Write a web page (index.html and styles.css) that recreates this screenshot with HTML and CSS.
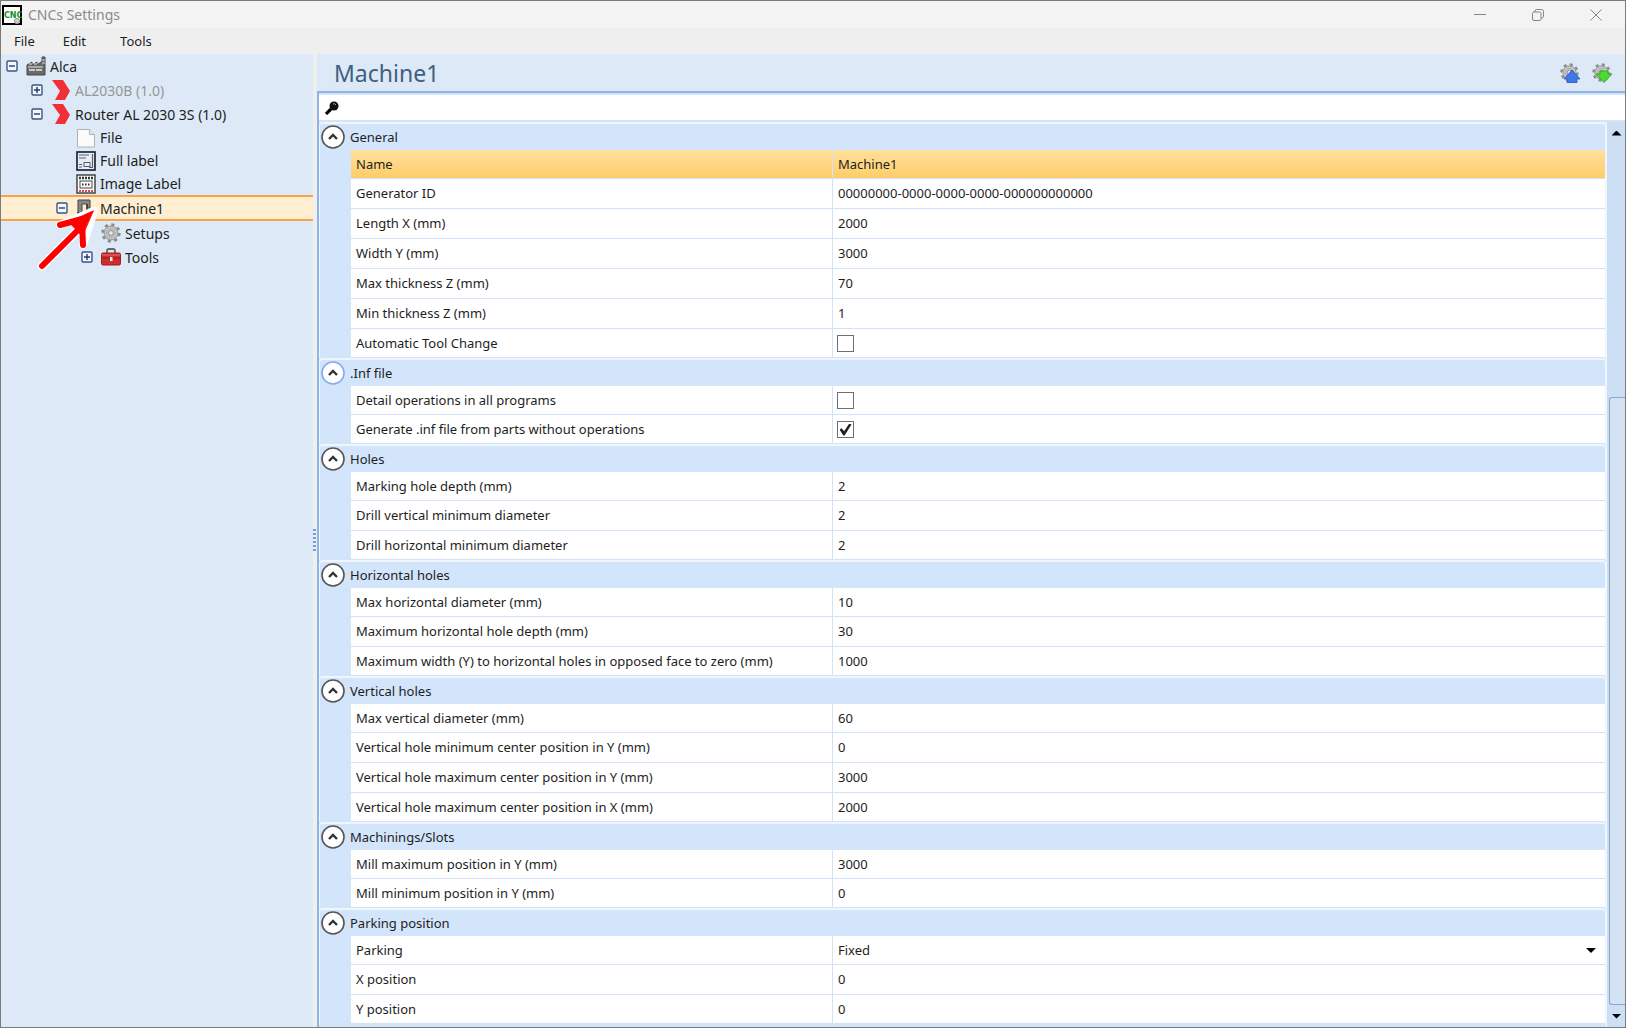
FILE: index.html
```
<!DOCTYPE html>
<html lang="en">
<head>
    <meta charset="UTF-8">
    <meta name="viewport" content="width=device-width, initial-scale=1.0">
    <title>CNCs Settings</title>
    <link rel="stylesheet" href="styles.css">
</head>
<body>
    <!-- Shared icon shapes -->
    <svg class="defs" aria-hidden="true">
        <symbol id="minus" viewBox="0 0 12 12"><rect x="1" y="1" width="10" height="10" rx="1" fill="#f4f8fd" stroke="#3a5583" stroke-width="1.4"/><path d="M3 6h6" stroke="#1f3b70" stroke-width="1.4"/></symbol>
        <symbol id="plus" viewBox="0 0 12 12"><rect x="1" y="1" width="10" height="10" rx="1" fill="#f4f8fd" stroke="#3a5583" stroke-width="1.4"/><path d="M3 6h6M6 3v6" stroke="#1f3b70" stroke-width="1.4"/></symbol>
        <symbol id="chevron" viewBox="0 0 20 20"><path d="M1 0h11l7 11-5 9H4l5-9z" fill="#ef3038"/></symbol>
        <symbol id="gear" viewBox="0 0 20 20">
            <circle cx="10" cy="10" r="8.2" fill="none" stroke="#8c8c8c" stroke-width="3" stroke-dasharray="3.1 3.34"/>
            <circle cx="10" cy="10" r="7" fill="#c6c6c6" stroke="#929292"/>
            <circle cx="10" cy="10" r="4.4" fill="none" stroke="#adadad"/>
            <circle cx="10" cy="10" r="2.4" fill="#e6edf6" stroke="#8c8c8c"/>
        </symbol>
        <symbol id="up" viewBox="0 0 24 24"><circle cx="12" cy="12" r="11" fill="#fff" stroke="currentColor" stroke-width="1.6"/><path d="M8 14l4-4 4 4" fill="none" stroke="#333" stroke-width="2.4"/></symbol>
    </svg>

    <div class="window">
        <header class="titlebar">
            <svg class="app-icon" viewBox="0 0 20 20"><rect x="1" y="1" width="18" height="18" fill="#fff" stroke="#000" stroke-width="2"/><text class="app-icon-text" x="2" y="13">CNC</text><circle cx="15" cy="16" r="2.6" fill="#ccc" stroke="#999"/></svg>
            <span class="title">CNCs Settings</span>
            <div class="window-buttons">
                <button aria-label="Minimize"><svg viewBox="0 0 12 12"><path d="M0 5.500h12"/></svg></button>
                <button aria-label="Restore"><svg viewBox="0 0 12 12"><rect x=".5" y="3" width="8.5" height="8.5" rx="1.5"/><path d="M3 3V2q0-1.500 1.500-1.500H9.500q2 0 2 2V7.500q0 1.500-2 1.500"/></svg></button>
                <button aria-label="Close"><svg viewBox="0 0 12 12"><path d="M.5.500l11 11M11.500.500l-11 11"/></svg></button>
            </div>
        </header>

        <nav class="menu">
            <button>File</button>
            <button>Edit</button>
            <button>Tools</button>
        </nav>

        <main class="content">
            <aside class="sidebar">
                <ul class="tree">
                    <li class="node">
                        <button class="expander" aria-label="Collapse Alca"><svg><use href="#minus"/></svg></button>
                        <svg class="icon" viewBox="0 0 20 20"><path d="M1 19V9l5-3v3l5-3v3l4-3h1V1h3v18z" fill="#6a6a6a" stroke="#4a4a4a"/><path d="M2 11h15M3 8h3M8 8h3" stroke="#bdbdbd" stroke-width="1.500"/><path d="M3 14h6M10 14h6" stroke="#c9c9c9" stroke-width="2"/><path d="M16 4h3M16 7h3" stroke="#ddd"/></svg>
                        <span>Alca</span>
                    </li>
                    <li class="node level-1 disabled">
                        <button class="expander" aria-label="Expand AL2030B"><svg><use href="#plus"/></svg></button>
                        <svg class="icon"><use href="#chevron"/></svg>
                        <span>AL2030B (1.0)</span>
                    </li>
                    <li class="node level-1">
                        <button class="expander" aria-label="Collapse Router"><svg><use href="#minus"/></svg></button>
                        <svg class="icon"><use href="#chevron"/></svg>
                        <span>Router AL 2030 3S (1.0)</span>
                    </li>
                    <li class="node level-2">
                        <span class="expander"></span>
                        <svg class="icon" viewBox="0 0 20 20"><path d="M1.500 1.500h12l5 5v12.500h-17z" fill="#fbfbfb" stroke="#b2b2b2"/><path d="M13.500 1.500v5h5" fill="#e8e8e8" stroke="#b2b2b2"/></svg>
                        <span>File</span>
                    </li>
                    <li class="node level-2">
                        <span class="expander"></span>
                        <svg class="icon" viewBox="0 0 20 20"><rect x="1" y="1" width="18" height="18" fill="#e6edf7" stroke="#1d2636" stroke-width="1.700"/><path d="M3 4h10M3 7h7M3 13.500h3M3 16h3M16.500 3v13M13 16.500h4" stroke="#59606c" stroke-width="1.200"/><rect x="8" y="11.500" width="6" height="4" fill="none" stroke="#59606c"/></svg>
                        <span>Full label</span>
                    </li>
                    <li class="node level-2">
                        <span class="expander"></span>
                        <svg class="icon" viewBox="0 0 20 20"><rect x="1" y="1" width="18" height="18" fill="#fff" stroke="#444" stroke-width="1.500"/><path d="M3 4h14" stroke="#333" stroke-width="2.500" stroke-dasharray="2 1"/><rect x="4" y="7" width="12" height="7" fill="#fff" stroke="#444"/><path d="M6 10.500h8" stroke="#333" stroke-width="2" stroke-dasharray="1.500 1.500"/><path d="M3 17h14" stroke="#e0474c" stroke-width="2" stroke-dasharray="2 1"/></svg>
                        <span>Image Label</span>
                    </li>
                    <li class="node level-2 selected">
                        <button class="expander" aria-label="Collapse Machine1"><svg><use href="#minus"/></svg></button>
                        <svg class="icon" viewBox="0 0 20 20"><path d="M2 2h12v8h-3V6H6v9H2z" fill="#888" stroke="#444"/><path d="M11 6v7M1 16h17M2 14v4M17 15v4" stroke="#333" stroke-width="1.500"/></svg>
                        <span>Machine1</span>
                    </li>
                    <li class="node level-3">
                        <span class="expander"></span>
                        <svg class="icon"><use href="#gear"/></svg>
                        <span>Setups</span>
                    </li>
                    <li class="node level-3">
                        <button class="expander" aria-label="Expand Tools"><svg><use href="#plus"/></svg></button>
                        <svg class="icon" viewBox="0 0 20 20"><path d="M6 6V4q0-2 2-2h4q2 0 2 2v2" fill="none" stroke="#666" stroke-width="1.800"/><rect x=".5" y="6" width="19" height="12" rx="1.500" fill="#cf2d2d" stroke="#982020"/><path d="M1 8h18" stroke="#ee7070"/><path d="M1 11h18" stroke="#8c1c1c"/><rect x="9" y="10" width="2.500" height="4" fill="#eee"/></svg>
                        <span>Tools</span>
                    </li>
                </ul>
                <!-- Pointer over the selected machine -->
                <svg class="pointer" viewBox="0 0 62 66">
                    <g fill="none" stroke-linecap="round" stroke-linejoin="round">
                        <path d="M5 59L45 19" stroke="#fff" stroke-width="9"/>
                        <path d="M57 4L23 18M57 4L46 38" stroke="#fff" stroke-width="8"/>
                        <path d="M5 59L45 19" stroke="#f00" stroke-width="6"/>
                        <path d="M23 18L45 12L46 38" stroke="#f00" stroke-width="6"/>
                        <path d="M56 4L32 15L45 29z" fill="#f00" stroke="#f00"/>
                    </g>
                </svg>
            </aside>

            <div class="splitter"><span class="grip"></span></div>

            <section class="panel">
                <div class="panel-header">
                    <h1>Machine1</h1>
                    <button aria-label="Export settings"><svg viewBox="0 0 20 20"><use href="#gear" width="19" height="19"/><path d="M12 7l8 9h-3v3.500H7V16H4z" fill="#3f79e8" stroke="#2353b5" stroke-width=".8"/></svg></button>
                    <button aria-label="Import settings"><svg viewBox="0 0 20 20"><use href="#gear" width="19" height="19"/><path d="M8 8h8v3h4l-8 8.500L4 11h4z" fill="#4bdc32" stroke="#2b9d1c" stroke-width=".8"/></svg></button>
                </div>

                <div class="panel-body">
                    <div class="search">
                        <label for="search"><svg viewBox="0 0 14 14"><path d="M1 13l5-5" stroke="#000" stroke-width="3.200"/><circle cx="9" cy="5" r="4.500" fill="#111"/><path d="M8 3q2-1 3 1" fill="none" stroke="#8fa7bd"/></svg></label>
                        <input type="text" id="search" aria-label="Search">
                    </div>

                    <div class="scroll-area">
                        <div class="groups">
                            <section class="group">
                                <h2><button aria-label="Collapse General"><svg><use href="#up"/></svg></button>General</h2>
                                <div class="row active"><label for="name">Name</label><input type="text" id="name" value="Machine1"></div>
                                <div class="row"><label for="generator">Generator ID</label><input type="text" id="generator" value="00000000-0000-0000-0000-000000000000"></div>
                                <div class="row"><label for="length">Length X (mm)</label><input type="text" id="length" value="2000"></div>
                                <div class="row"><label for="width">Width Y (mm)</label><input type="text" id="width" value="3000"></div>
                                <div class="row"><label for="max-z">Max thickness Z (mm)</label><input type="text" id="max-z" value="70"></div>
                                <div class="row"><label for="min-z">Min thickness Z (mm)</label><input type="text" id="min-z" value="1"></div>
                                <div class="row"><label for="atc">Automatic Tool Change</label><span class="check"><input type="checkbox" id="atc"></span></div>
                            </section>

                            <section class="group focused">
                                <h2><button aria-label="Collapse .Inf file"><svg><use href="#up"/></svg></button>.Inf file</h2>
                                <div class="row"><label for="detail">Detail operations in all programs</label><span class="check"><input type="checkbox" id="detail"></span></div>
                                <div class="row"><label for="generate">Generate .inf file from parts without operations</label><span class="check"><input type="checkbox" id="generate" checked></span></div>
                            </section>

                            <section class="group">
                                <h2><button aria-label="Collapse Holes"><svg><use href="#up"/></svg></button>Holes</h2>
                                <div class="row"><label for="marking">Marking hole depth (mm)</label><input type="text" id="marking" value="2"></div>
                                <div class="row"><label for="drill-v">Drill vertical minimum diameter</label><input type="text" id="drill-v" value="2"></div>
                                <div class="row"><label for="drill-h">Drill horizontal minimum diameter</label><input type="text" id="drill-h" value="2"></div>
                            </section>

                            <section class="group">
                                <h2><button aria-label="Collapse Horizontal holes"><svg><use href="#up"/></svg></button>Horizontal holes</h2>
                                <div class="row"><label for="h-diameter">Max horizontal diameter (mm)</label><input type="text" id="h-diameter" value="10"></div>
                                <div class="row"><label for="h-depth">Maximum horizontal hole depth (mm)</label><input type="text" id="h-depth" value="30"></div>
                                <div class="row"><label for="h-width">Maximum width (Y) to horizontal holes in opposed face to zero (mm)</label><input type="text" id="h-width" value="1000"></div>
                            </section>

                            <section class="group">
                                <h2><button aria-label="Collapse Vertical holes"><svg><use href="#up"/></svg></button>Vertical holes</h2>
                                <div class="row"><label for="v-diameter">Max vertical diameter (mm)</label><input type="text" id="v-diameter" value="60"></div>
                                <div class="row"><label for="v-min-y">Vertical hole minimum center position in Y (mm)</label><input type="text" id="v-min-y" value="0"></div>
                                <div class="row"><label for="v-max-y">Vertical hole maximum center position in Y (mm)</label><input type="text" id="v-max-y" value="3000"></div>
                                <div class="row"><label for="v-max-x">Vertical hole maximum center position in X (mm)</label><input type="text" id="v-max-x" value="2000"></div>
                            </section>

                            <section class="group">
                                <h2><button aria-label="Collapse Machinings/Slots"><svg><use href="#up"/></svg></button>Machinings/Slots</h2>
                                <div class="row"><label for="mill-max">Mill maximum position in Y (mm)</label><input type="text" id="mill-max" value="3000"></div>
                                <div class="row"><label for="mill-min">Mill minimum position in Y (mm)</label><input type="text" id="mill-min" value="0"></div>
                            </section>

                            <section class="group">
                                <h2><button aria-label="Collapse Parking position"><svg><use href="#up"/></svg></button>Parking position</h2>
                                <div class="row"><label for="parking">Parking</label><span class="combo"><select id="parking"><option>Fixed</option></select></span></div>
                                <div class="row"><label for="park-x">X position</label><input type="text" id="park-x" value="0"></div>
                                <div class="row"><label for="park-y">Y position</label><input type="text" id="park-y" value="0"></div>
                            </section>
                        </div>

                        <div class="scrollbar">
                            <button class="arrow-up" aria-label="Scroll up"></button>
                            <div class="track"></div>
                            <div class="thumb"></div>
                            <button class="arrow-down" aria-label="Scroll down"></button>
                        </div>
                    </div>
                </div>
            </section>
        </main>
    </div>
</body>
</html>
```
FILE: styles.css
```
* {
    box-sizing: border-box;
}

body {
    margin: 0;
    padding: 0 6px 4px 0;
    height: 100vh;
    background-color: #fff;
    color: #1e1e1e;
    font-family: "Noto Sans", "Open Sans", sans-serif;
    font-size: 13px;
}

button {
    padding: 0;
    border: none;
    background: none;
    color: inherit;
    font: inherit;
}

svg {
    display: block;
}

.defs {
    display: none;
}

.window {
    display: flex;
    flex-direction: column;
    height: 100%;
    border: 1px solid #7b7b7b;
    background-color: #efefef;
}

/* Title bar and menu */
.titlebar {
    display: flex;
    align-items: center;
    height: 27px;
    flex: none;
    padding-left: 1px;
    background-color: #f3f3f3;
    color: #8a8a8a;
    font-size: 14px;
}

.app-icon {
    width: 20px;
    height: 20px;
}

.app-icon-text {
    font: bold 8px "DejaVu Sans", sans-serif;
    fill: #15902b;
}

.title {
    margin-left: 6px;
}

.window-buttons {
    display: flex;
    margin-left: auto;
}

.window-buttons button {
    display: flex;
    align-items: center;
    justify-content: center;
    width: 58px;
    height: 26px;
}

.window-buttons svg {
    width: 12px;
    height: 12px;
    fill: none;
    stroke: #858585;
}

.menu {
    display: flex;
    gap: 28px;
    height: 26px;
    flex: none;
    padding: 0 0 1px 13px;
    font-size: 13px;
}

.menu button:last-child {
    margin-left: 6px;
}

.content {
    display: flex;
    flex: 1;
    min-height: 0;
}

/* Tree */
.sidebar {
    position: relative;
    width: 312px;
    flex: none;
    background-color: #dde9f7;
}

.tree {
    margin: 0;
    padding: 0;
    list-style: none;
    font-size: 14px;
}

.node {
    display: flex;
    align-items: center;
    height: 24px;
    padding-left: 5px;
    white-space: nowrap;
}

.level-1 {
    padding-left: 30px;
}

.level-2 {
    height: 23px;
    padding-left: 55px;
}

.level-3 {
    padding-left: 80px;
}

.expander {
    width: 12px;
    height: 12px;
    margin-right: 8px;
}

.expander svg {
    width: 12px;
    height: 12px;
}

.icon {
    width: 20px;
    height: 20px;
    margin-right: 4px;
}

.disabled {
    color: #969696;
}

.selected {
    height: 26px;
    border-top: 2px solid #f7a350;
    border-bottom: 2px solid #f7a350;
    background-color: #ffeed0;
}

.pointer {
    position: absolute;
    left: 36px;
    top: 153px;
    width: 62px;
    height: 66px;
}

.splitter {
    display: flex;
    align-items: center;
    width: 4px;
    flex: none;
}

.grip {
    width: 3px;
    height: 24px;
    background-image: linear-gradient(#6f9fdc 50%, transparent 50%);
    background-size: 3px 4px;
}

/* Settings panel */
.panel {
    display: flex;
    flex-direction: column;
    flex: 1;
    min-width: 0;
}

.panel-header {
    display: flex;
    align-items: center;
    gap: 12px;
    height: 37px;
    flex: none;
    padding: 0 13px 0 17px;
    background-color: #dde9f7;
}

.panel-header h1 {
    margin: 0 auto 0 0;
    color: #415f80;
    font-size: 23px;
    font-weight: normal;
}

.panel-header svg {
    width: 20px;
    height: 20px;
}

.panel-body {
    display: flex;
    flex-direction: column;
    flex: 1;
    min-height: 0;
    border: solid #8fb3e3;
    border-width: 2px 0 0 2px;
    background-color: #d3e5fb;
}

.search {
    display: flex;
    align-items: center;
    height: 25px;
    flex: none;
    margin: 2px 0;
    padding-left: 6px;
    background-color: #fff;
}

.search svg {
    width: 14px;
    height: 14px;
}

.search input {
    flex: 1;
}

.scroll-area {
    display: flex;
    flex: 1;
    min-height: 0;
}

.groups {
    flex: 1;
    min-width: 0;
    overflow: hidden;
}

.group {
    padding-left: 31px;
    border: solid #f0f6fe;
    border-width: 2px 1px 0 1px;
    border-radius: 4px 4px 0 0;
    background-color: #d3e5fb;
}

.group h2 {
    display: flex;
    align-items: center;
    height: 26px;
    margin: 0 0 0 -31px;
    font-size: 13px;
    font-weight: normal;
}

.group h2 button {
    margin: 0 5px 0 1px;
    color: #555;
}

.group h2 svg {
    width: 24px;
    height: 24px;
}

.focused h2 button {
    color: #82aaf5;
}

.row {
    display: grid;
    grid-template-columns: 482px 1fr;
    height: 30px;
    border-bottom: 1px solid #d3e3f7;
    background-color: #fff;
}

.row label {
    padding-left: 5px;
    border-right: 1px solid #d3e3f7;
    line-height: 29px;
    white-space: nowrap;
}

h2 + .row,
.row:last-child {
    height: 29px;
}

.row.active {
    background-image: linear-gradient(#ffe09c, #ffcd69);
}

input[type="text"],
select {
    min-width: 0;
    padding: 0 5px 1px;
    border: none;
    outline: none;
    background: transparent;
    color: inherit;
    font: inherit;
}

.check {
    display: flex;
    align-items: center;
    padding-left: 4px;
}

input[type="checkbox"] {
    display: grid;
    place-items: center;
    width: 17px;
    height: 17px;
    margin: 0;
    appearance: none;
    border: 1px solid #707070;
    background-color: #fff;
}

input[type="checkbox"]:checked::before {
    content: "";
    width: 12px;
    height: 12px;
    background-color: #222;
    clip-path: polygon(0 50%, 18% 40%, 38% 65%, 82% 0, 100% 8%, 42% 100%, 32% 100%);
}

.combo {
    display: flex;
    align-items: center;
    padding-right: 9px;
}

.combo select {
    flex: 1;
    appearance: none;
}

.combo::after,
.arrow-up::before,
.arrow-down::before {
    content: "";
    width: 10px;
    height: 5px;
    background-color: #000;
    clip-path: polygon(0 0, 100% 0, 50% 100%);
}

/* Scrollbar */
.scrollbar {
    display: flex;
    flex-direction: column;
    width: 19px;
    flex: none;
    padding-left: 1px;
    border-left: 1px solid #f0f6fe;
    background-color: #cddff5;
}

.arrow-up,
.arrow-down {
    display: flex;
    align-items: center;
    justify-content: center;
    height: 22px;
    flex: none;
}

.arrow-up::before {
    clip-path: polygon(50% 0, 100% 100%, 0 100%);
}

.track {
    flex: 5;
}

.thumb {
    flex: 12;
    margin-left: 1px;
    border: solid #8ba6cb;
    border-width: 1px 0 1px 1px;
    border-radius: 3px 0 0 3px;
    background-color: #d3e3f3;
}
```
